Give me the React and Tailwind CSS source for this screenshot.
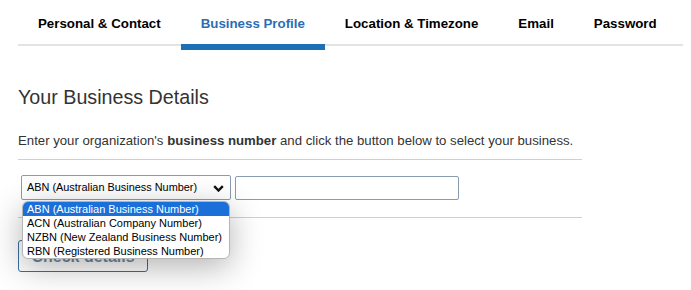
import React from 'react';

const tabs = ['Personal & Contact', 'Business Profile', 'Location & Timezone', 'Email', 'Password'];

const options = [
  'ABN (Australian Business Number)',
  'ACN (Australian Company Number)',
  'NZBN (New Zealand Business Number)',
  'RBN (Registered Business Number)',
];

export default function App() {
  return (
    <div className="h-[290px] w-[691px] overflow-hidden bg-white px-[18px] font-['Liberation_Sans',Arial,sans-serif] text-[#333]">
      {/* Tabs */}
      <nav className="flex w-[665px] whitespace-nowrap border-b-2 border-[#e3e3e3]">
        {tabs.map((t) =>
          t === 'Business Profile' ? (
            <div
              key={t}
              className="-mb-[6px] flex h-[50px] items-center border-b-[6px] border-[#1f6fb6] px-5 pt-[4px] text-[13.3px] font-bold text-[#2a6eb4]"
            >
              {t}
            </div>
          ) : (
            <div key={t} className="flex h-[44px] items-center px-5 pt-[4px] text-[13.3px] font-bold text-black">
              {t}
            </div>
          )
        )}
      </nav>

      <h2 className="mt-[40px] text-[19.7px] leading-[23px] text-[#333]">Your Business Details</h2>

      <p className="mt-[22px] whitespace-nowrap text-[13.2px] leading-[20px] text-[#333]">
        Enter your organization's <b>business number</b> and click the button below to select your business.
      </p>
      <div className="mt-[8px] w-[564px] border-t border-[#cfcfcf]" />

      {/* Lookup row */}
      <div className="relative mt-[15px]">
        <div className="flex items-start">
          <div className="ml-[3px] flex h-[25px] w-[210px] items-center justify-between whitespace-nowrap rounded-[2px] border border-[#8a9bb0] pl-[5px] pr-[6px] text-[10.9px] text-black">
            <span>ABN (Australian Business Number)</span>
            <svg width="11" height="7" viewBox="0 0 11 7" className="mt-[1px]">
              <polyline points="1.2,1.2 5.5,5.5 9.8,1.2" fill="none" stroke="#111" strokeWidth="2.4" />
            </svg>
          </div>
          <div className="ml-[4px] mt-[1px] h-[24px] w-[224px] rounded-[2px] border border-[#8a9bb0]" />
        </div>

        <div className="mt-[17px] w-[564px] border-t border-[#cfcfcf]" />

        <button className="mt-[22px] flex h-[32px] w-[130px] items-center justify-center rounded-[3px] border border-[#3a6f9f] pt-[2px] text-[16px] font-bold text-[#6f8aa6]">
          Check details
        </button>

        {/* Open select list */}
        <div className="absolute left-[4px] top-[26px] w-[208px] overflow-hidden whitespace-nowrap rounded-[6px] border border-[#b5b5b5] bg-white shadow-[0_8px_32px_rgba(0,0,0,0.3)]">
          {options.map((o, i) => (
            <div
              key={o}
              className={
                i === 0
                  ? 'h-[14px] bg-[#1a6fd8] px-[4px] text-[11px] leading-[14px] text-white'
                  : 'h-[14px] px-[4px] text-[11px] leading-[14px] text-black'
              }
            >
              {o}
            </div>
          ))}
        </div>
      </div>
    </div>
  );
}
